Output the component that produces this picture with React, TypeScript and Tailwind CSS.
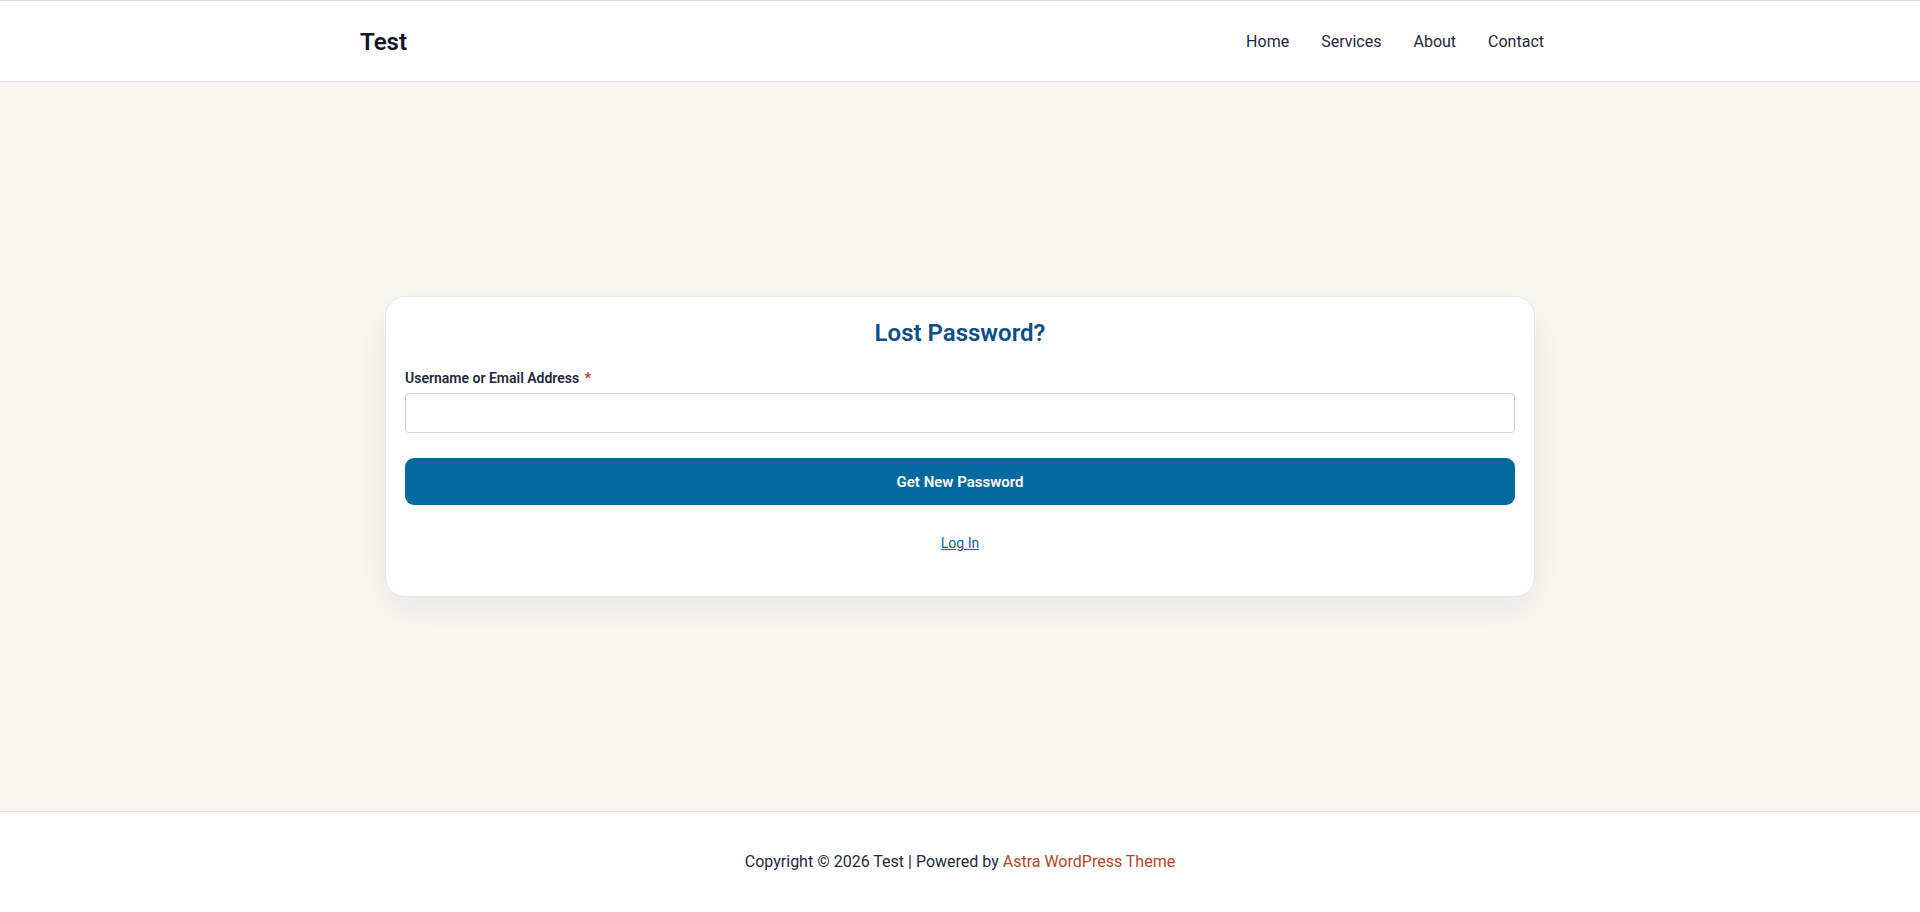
import React, { useState } from 'react'

const navItems = ['Home', 'Services', 'About', 'Contact']

export default function App() {
  const [email, setEmail] = useState('')

  return (
    <div className="flex min-h-[912px] flex-col bg-white text-[#1e293b]" style={{ fontFamily: 'Roboto, "Noto Sans", sans-serif' }}>
      <header className="border-y border-[#dddddd] bg-white">
        <div className="mx-auto flex h-20 w-[1240px] items-center justify-between px-5 pt-[2px]">
          <a href="#" className="text-[24px] font-semibold leading-none text-[#0f172a]">Test</a>
          <nav className="flex items-center">
            {navItems.map((item) => (
              <a key={item} href="#" className="px-4 text-[16px] text-[#1e293b]">
                {item}
              </a>
            ))}
          </nav>
        </div>
      </header>

      <main className="flex flex-1 items-center justify-center bg-[#faf7f1]">
        <div className="w-[1150px] rounded-[20px] border border-[#e2e8f0] bg-white px-[19px] pt-[22px] pb-[42px] shadow-[0_12px_40px_rgba(15,23,42,0.07)]">
          <h1 className="text-center text-[24px] font-semibold leading-[1.2] text-[#0b4f86]">Lost Password?</h1>

          <form className="mt-[21px]" onSubmit={(e) => e.preventDefault()}>
            <label className="block text-[14px] font-semibold leading-[1.5] text-[#1e293b]">
              Username or Email Address <span className="ml-0.5 text-[#dc2626]">*</span>
            </label>
            <input
              type="text"
              value={email}
              onChange={(e) => setEmail(e.target.value)}
              className="mt-[4px] block h-10 w-full rounded-[4px] border border-[#d1d5db] bg-white px-3 text-[15px] outline-none"
            />
            <button type="submit" className="mt-[25px] h-[47px] w-full rounded-[9px] bg-[#03699f] text-[15px] font-semibold text-white">
              Get New Password
            </button>
          </form>

          <div className="mt-[28px] text-center text-[14px] leading-[1.5]">
            <a href="#" className="text-[#03699f] underline">Log In</a>
          </div>
        </div>
      </main>

      <footer className="flex h-[101px] items-center justify-center border-t border-[#dddddd] bg-white text-[16px] text-[#1e293b]">
        <p>
          Copyright © 2026 Test | Powered by <a href="#" className="text-[#b7461f]">Astra WordPress Theme</a>
        </p>
      </footer>
    </div>
  )
}
